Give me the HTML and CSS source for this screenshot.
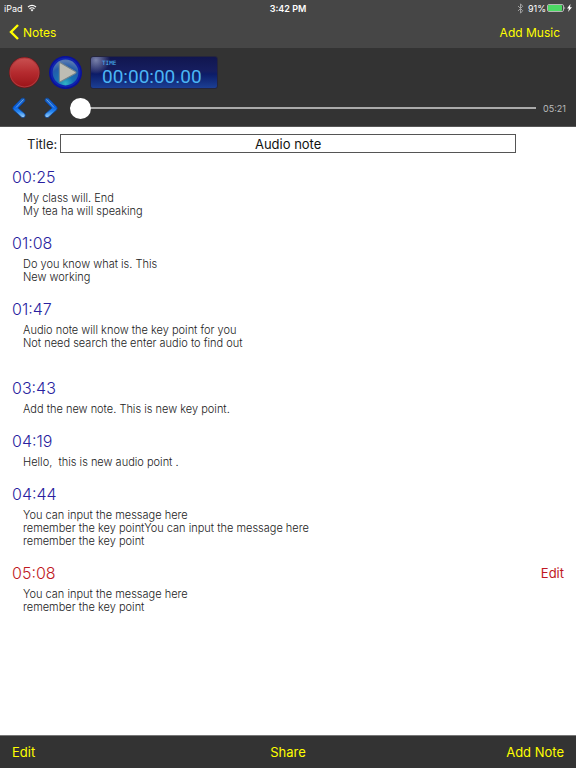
FILE: index.html
```html
<!DOCTYPE html>
<html lang="en">
<head>
  <meta charset="UTF-8">
  <meta name="viewport" content="width=device-width, initial-scale=1.0">
  <title>Audio note</title>
  <link rel="stylesheet" href="styles.css">
</head>
<body>

  <header class="top">
    <div class="status">
      <div class="status-left">
        <span>iPad</span>
        <svg class="wifi" viewBox="0 0 20 15">
          <path d="M2 5.5Q10 -1 18 5.5M5 9Q10 5 15 9" fill="none" stroke="#fff" stroke-width="2.4"/>
          <path d="M7 11Q10 8.7 13 11L10 14.5z" fill="#fff"/>
        </svg>
      </div>
      <div class="clock">3:42 PM</div>
      <div class="status-right">
        <svg class="bluetooth" viewBox="0 0 12 20">
          <path d="M1.500 5.500L10 14L6 18.500V1.500L10 6L1.500 14.500" fill="none" stroke="#a2a2a2" stroke-width="1.800"/>
        </svg>
        <span>91%</span>
        <svg class="battery" viewBox="0 0 19 8">
          <rect x=".5" y=".5" width="16" height="7" rx="1.500" fill="none" stroke="#b5b5b5"/>
          <rect x="1" y="1" width="14" height="6" rx="1" fill="#4cd964"/>
          <path d="M17.500 2.500q1.500 1.500 0 3z" fill="#ddd"/>
        </svg>
        <svg class="bolt" viewBox="0 0 5 8">
          <path d="M3.500 0L0 4.500h2L1 8l4-4.800H3z" fill="#fff"/>
        </svg>
      </div>
    </div>
    <nav class="navbar">
      <a href="#" class="back">
        <svg class="back-icon" viewBox="0 0 10 16">
          <path d="M9 1L2 8l7 7" fill="none" stroke="#ff0" stroke-width="2.400"/>
        </svg>
        Notes
      </a>
      <button class="bar-btn">Add Music</button>
    </nav>
  </header>

  <section class="player">
    <div class="player-row">
      <button class="round-btn" aria-label="Record">
        <svg viewBox="0 0 32 32">
          <defs>
            <linearGradient id="red" x1="0" y1="0" x2="0" y2="1">
              <stop offset="0" stop-color="#c95050"/>
              <stop offset=".5" stop-color="#b52b2f"/>
              <stop offset="1" stop-color="#9c1419"/>
            </linearGradient>
          </defs>
          <circle cx="16" cy="16" r="15" fill="#6f1517"/>
          <circle cx="16" cy="16" r="14" fill="url(#red)" stroke="#b03a3e" stroke-width="1"/>
        </svg>
      </button>
      <button class="round-btn" aria-label="Play">
        <svg viewBox="0 0 32 32">
          <defs>
            <radialGradient id="blue" cx=".5" cy=".9" r=".8">
              <stop offset="0" stop-color="#31b4c4"/>
              <stop offset=".35" stop-color="#1873b4"/>
              <stop offset=".75" stop-color="#235bab"/>
              <stop offset="1" stop-color="#5478b0"/>
            </radialGradient>
          </defs>
          <circle cx="16" cy="16" r="16" fill="#0a119a"/>
          <circle cx="16" cy="16" r="13.500" fill="url(#blue)" stroke="#1023ae" stroke-width="2"/>
          <path d="M10 7.500Q10 6 11.500 6.800L25.500 15Q27 16 25.500 17L11.500 24.700Q10 25.500 10 24z" fill="#bdbdb4" stroke="#73848c"/>
        </svg>
      </button>
      <div class="display">
        <span class="display-label">TIME</span>
        <span class="display-time">00:00:00.00</span>
      </div>
    </div>
    <div class="player-row">
      <button class="skip" aria-label="Previous">
        <svg viewBox="0 0 14 22">
          <defs>
            <linearGradient id="arrow" x1="0" y1="0" x2="0" y2="1">
              <stop offset="0" stop-color="#2565b5"/>
              <stop offset=".45" stop-color="#075de0"/>
              <stop offset=".7" stop-color="#2787f0"/>
              <stop offset="1" stop-color="#a3d3f6"/>
            </linearGradient>
          </defs>
          <path d="M9.500 1.500Q13 0 13 4L6 11L13 17Q14 21 10 20.500L1.500 13Q0 11 1.500 9.500z" fill="url(#arrow)" stroke="#0b459c" stroke-width=".8"/>
          <path d="M11.500 2.500L4 10.500" stroke="#80b9ee" stroke-width=".8"/>
        </svg>
      </button>
      <button class="skip" aria-label="Next">
        <svg viewBox="0 0 14 22">
          <path d="M4.500 1.500Q1 0 1 4L8 11L1 17Q0 21 4 20.500L12.500 13Q14 11 12.500 9.500z" fill="url(#arrow)" stroke="#0b459c" stroke-width=".8"/>
          <path d="M2.500 2.500L10 10.500" stroke="#80b9ee" stroke-width=".8"/>
        </svg>
      </button>
      <input type="range" class="seek" min="0" max="321" value="0" aria-label="Position">
      <span class="duration">05:21</span>
    </div>
  </section>

  <main>
    <div class="title-row">
      <label for="title">Title:</label>
      <input type="text" id="title" value="Audio note">
    </div>

    <ul class="notes">
      <li>
        <div class="note-head"><span class="time">00:25</span></div>
        <p>My class will. End
My tea ha will speaking</p>
      </li>
      <li>
        <div class="note-head"><span class="time">01:08</span></div>
        <p>Do you know what is. This
New working</p>
      </li>
      <li>
        <div class="note-head"><span class="time">01:47</span></div>
        <p>Audio note will know the key point for you
Not need search the enter audio to find out
&nbsp;</p>
      </li>
      <li>
        <div class="note-head"><span class="time">03:43</span></div>
        <p>Add the new note. This is new key point.</p>
      </li>
      <li>
        <div class="note-head"><span class="time">04:19</span></div>
        <p>Hello,  this is new audio point .</p>
      </li>
      <li>
        <div class="note-head"><span class="time">04:44</span></div>
        <p>You can input the message here
remember the key pointYou can input the message here
remember the key point</p>
      </li>
      <li class="current">
        <div class="note-head">
          <span class="time">05:08</span>
          <button class="edit-note">Edit</button>
        </div>
        <p>You can input the message here
remember the key point</p>
      </li>
    </ul>
  </main>

  <footer class="toolbar">
    <button class="bar-btn">Edit</button>
    <button class="bar-btn">Share</button>
    <button class="bar-btn">Add Note</button>
  </footer>

</body>
</html>
```

FILE: styles.css
```css
* {
  box-sizing: border-box;
}

body {
  margin: 0;
  min-height: 100vh;
  display: flex;
  flex-direction: column;
  background: #fff;
  color: #222;
  font-family: Inter, "Liberation Sans", sans-serif;
  font-size: 13px;
}

button {
  padding: 0;
  border: none;
  background: none;
  font-family: inherit;
  cursor: pointer;
}

svg {
  display: block;
}

/* status bar + navigation */
.top {
  background: #464646;
}

.status {
  display: grid;
  grid-template-columns: 1fr auto 1fr;
  align-items: center;
  height: 16px;
  padding: 0 4px;
  color: #fff;
  font-size: 9px;
}

.status-left,
.status-right {
  display: flex;
  align-items: center;
  gap: 4px;
}

.status-right {
  justify-content: flex-end;
  gap: 1px;
}

.clock {
  font-weight: 600;
}

.wifi {
  width: 10px;
  height: 8px;
}

.bluetooth {
  width: 7px;
  height: 11px;
  margin-right: 3px;
}

.battery {
  width: 19px;
  height: 8px;
}

.bolt {
  width: 5px;
  height: 8px;
}

.navbar {
  display: flex;
  justify-content: space-between;
  align-items: center;
  height: 32px;
  padding: 0 16px 0 9px;
}

.back {
  display: flex;
  align-items: center;
  gap: 4px;
  color: #ff0;
  font-size: 12px;
  text-decoration: none;
}

.back-icon {
  width: 10px;
  height: 16px;
}

.bar-btn {
  color: #ff0;
  font-size: 13px;
}

.navbar .bar-btn {
  font-size: 12px;
}

/* player */
.player {
  padding: 8px 10px 7px 8px;
  background: #333;
  border-bottom: 1px solid #555;
}

.player-row {
  display: flex;
  align-items: center;
}

.round-btn {
  width: 33px;
  margin-right: 8px;
}

.display {
  display: flex;
  flex-direction: column;
  width: 128px;
  height: 33px;
  padding: 3px 0 0 11px;
  border: 1px solid #25253c;
  border-radius: 3px;
  background:
    radial-gradient(circle at 5px 3px, rgba(190, 200, 230, 0.6), transparent 14px),
    linear-gradient(#11164f, #161e60 45%, #0c1c68 55%, #1c3f94);
  color: #4bb5f5;
}

.display-label {
  font-family: "DejaVu Sans Mono", monospace;
  font-size: 6px;
  line-height: 6px;
}

.display-time {
  font-family: Roboto, sans-serif;
  font-size: 19px;
  line-height: 22px;
}

.skip {
  width: 14px;
  margin: 8px 0 0 4px;
}

.skip + .skip {
  margin: 8px 12px 0 18px;
}

.seek {
  appearance: none;
  flex: 1;
  min-width: 0;
  height: 22px;
  margin: 8px 7px 0 0;
  background: linear-gradient(#aaa, #aaa) center / 100% 2px no-repeat;
}

.seek::-webkit-slider-thumb {
  appearance: none;
  width: 21px;
  height: 21px;
  border-radius: 50%;
  background: #fff;
}

.duration {
  margin-top: 8px;
  color: #bbb;
  font-size: 9px;
}

/* notes */
main {
  flex: 1;
}

.title-row {
  display: flex;
  align-items: center;
  gap: 3px;
  padding: 7px 60px 0 27px;
}

.title-row label {
  font-size: 13px;
}

.title-row input {
  flex: 1;
  min-width: 0;
  height: 19px;
  padding: 0;
  border: 1px solid #555;
  border-radius: 0;
  color: #111;
  font-family: inherit;
  font-size: 13px;
  text-align: center;
}

.notes {
  margin: 0;
  padding: 12px;
  list-style: none;
}

.notes li {
  padding-bottom: 13px;
}

.note-head {
  display: flex;
  justify-content: space-between;
  align-items: center;
  height: 24px;
  margin-bottom: 3px;
}

.time {
  color: #2a1fa0;
  font-size: 16px;
  font-weight: 300;
}

.notes p {
  margin: 0;
  padding-left: 11px;
  font-size: 11px;
  font-weight: 300;
  line-height: 13px;
  white-space: pre-wrap;
}

.current .time,
.edit-note {
  color: #c01822;
}

.edit-note {
  font-size: 13px;
}

/* bottom bar */
.toolbar {
  display: grid;
  grid-template-columns: 1fr auto 1fr;
  align-items: center;
  height: 33px;
  padding: 0 12px;
  background: #333;
  border-top: 1px solid #777;
}

.toolbar .bar-btn:first-child {
  justify-self: start;
}

.toolbar .bar-btn:last-child {
  justify-self: end;
}
```
